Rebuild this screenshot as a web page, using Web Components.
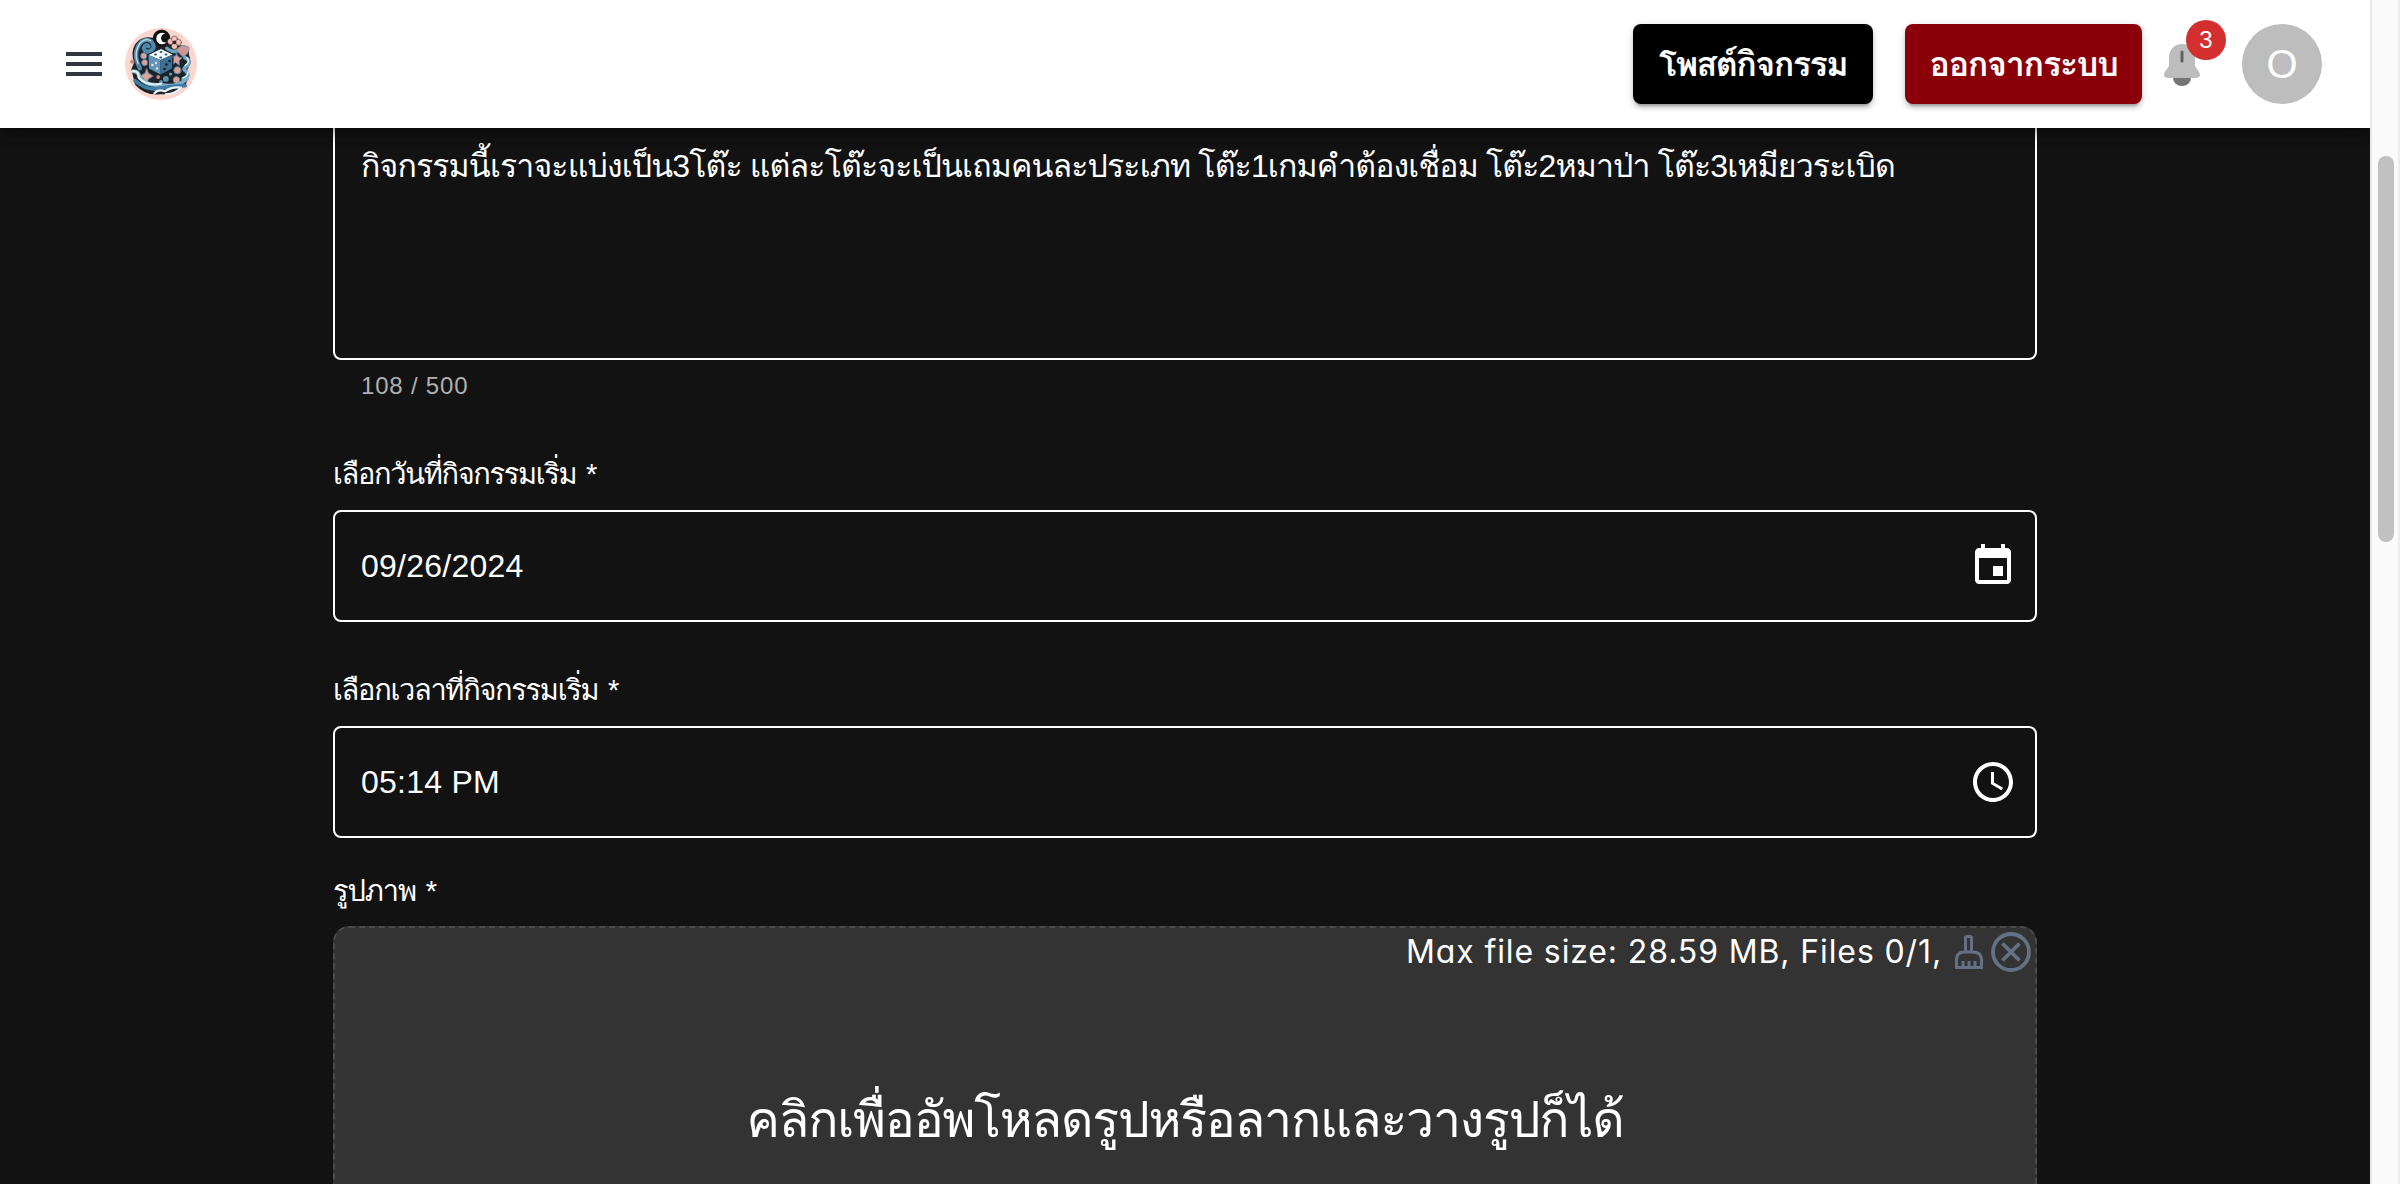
<!DOCTYPE html>
<html lang="th">
<head>
<meta charset="utf-8">
<title>Activity form</title>
<style>
html,body{margin:0;height:100%;overflow:hidden;background:#121212}
body{font-family:"Liberation Sans",Loma,Garuda,"Noto Sans Thai Looped","Noto Looped Thai",Waree,Umpush,"Noto Sans Thai","Noto Sans",sans-serif;color:#fff}
</style>
</head>
<body>
<event-page></event-page>
<script>
const define = (name, html, setup) => customElements.define(name, class extends HTMLElement {
  connectedCallback() {
    if (this.shadowRoot) return;
    this.attachShadow({mode: 'open'}).innerHTML = html;
    if (setup) setup(this, this.shadowRoot);
  }
});

/* One line of text whose tracking is set so that it fills the given width. */
define('fit-text', `<style>
:host{display:inline-block;white-space:pre}
span{display:inline-block}
</style><span><slot></slot></span>`, (el, root) => {
  const span = root.querySelector('span');
  const target = +el.getAttribute('width');
  const w0 = span.getBoundingClientRect().width;
  span.style.letterSpacing = '1px';
  const w1 = span.getBoundingClientRect().width;
  span.style.letterSpacing = ((target - w0) / (w1 - w0)).toFixed(3) + 'px';
});

define('menu-icon', `<style>:host{display:block;width:48px;height:48px}svg{display:block}</style>
<svg width="48" height="48" viewBox="0 0 24 24" fill="#2f3640"><path d="M3 18h18v-2H3v2zm0-5h18v-2H3v2zm0-7v2h18V6H3z"/></svg>`);

define('site-logo', `<style>:host{display:block;width:72px;height:72px}svg{display:block}</style>
<svg width="72" height="72" viewBox="0 0 72 72" fill="none" stroke-linecap="round" stroke-linejoin="round">
<circle cx="36" cy="36" r="36" fill="#fbd5ce"/>
<g transform="translate(1.500 1) scale(.96)">
<path d="M27 9Q15 7 9 16Q4 25 8 35L5 42L9 58Q20 70 35 68Q54 68 62 57Q66 50 63 43Q69 34 65 27Q66 17 56 17Q50 8 43 12Z" fill="#1d2326"/>
<path d="M14 41Q7 28 12 18Q18 8 26 13Q31 19 25 23Q19 25 18 20Q20 15 23 18" stroke="#4f88ad" stroke-width="4.500"/>
<path d="M12 36Q7 25 14 15Q19 9 25 12" stroke="#c4dde9" stroke-width="1.300"/>
<circle cx="36.500" cy="9.500" r="9" fill="#10110f"/><circle cx="37" cy="10" r="6" fill="#fff"/><circle cx="40.500" cy="9.500" r="4.500" fill="#10110f"/>
<g fill="#f6c1b8" stroke="#3a3032" stroke-width=".6"><circle cx="46" cy="13" r="3.200"/><circle cx="50" cy="10.500" r="3.200"/><circle cx="54" cy="14" r="3.200"/><circle cx="50" cy="18" r="3.200"/></g><circle cx="50" cy="14" r="2" fill="#3a2527"/>
<path d="M42 20Q49 27 58 20" stroke="#6ba3c4" stroke-width="3.500"/>
<path d="M52 22Q57 14 65 19Q66 25 59 29Z" fill="#cf9693" stroke="#7690a3"/>
<g fill="#dca29c" stroke="#4c7898" stroke-width="1"><circle cx="18" cy="28" r="3.300"/><circle cx="19" cy="35" r="3.300"/><path d="M21 41L23 46L28 49L23 52L21 57L18 52L14 49L19 46Z"/><path d="M52 25L54 29L58 30L55 33L55 38L51 35L48 37L49 31L47 28L51 28Z"/><circle cx="53" cy="43" r="3.800"/><circle cx="52" cy="53" r="3.500"/></g>
<g fill="#c98680"><circle cx="33" cy="50" r="2"/><circle cx="6" cy="34" r="2.200"/></g>
<g fill="#5d91b4"><circle cx="41" cy="52" r="3"/><circle cx="46" cy="47" r="1.800"/><circle cx="36" cy="55" r="2"/></g>
<path d="M61 30Q69 34 62 39Q58 42 62 44Q67 49 59 52" stroke="#6ca7c8" stroke-width="4"/><path d="M63 30Q67 34 61 38M64 45Q64 49 59 51" stroke="#eef6f9" stroke-width="1.400"/>
<path d="M7 44Q13 44 13 50Q21 60 36 58Q52 62 63 52" stroke="#77aecb" stroke-width="4"/><path d="M9 54Q23 66 39 61Q51 59 61 59" stroke="#3f7da6" stroke-width="4"/>
<path d="M6 44Q13 43 13 51Q22 60 36 57M29 67Q33 62 40 65Q47 60 56 61M41 68Q50 68 57 61" stroke="#e8f2f6" stroke-width="2.200"/>
</g>
<path d="M23.500 27L36 21L47.500 26.500L47 40.500L35.500 46.500L24 40.500Z" stroke="#17222a" stroke-width="2"/>
<path d="M23.500 27L36 21L47.500 26.500L35.500 32Z" fill="#f8fbfc"/><path d="M23.500 27L35.500 32V46.500L24 40.500Z" fill="#5f95b8"/><path d="M47.500 26.500L35.500 32V46.500L47 40.500Z" fill="#3b7199"/>
<g fill="#28577a"><ellipse cx="36" cy="24" rx="1.500" ry=".9"/><ellipse cx="30.500" cy="26.500" rx="1.500" ry=".9"/><ellipse cx="41" cy="26.500" rx="1.500" ry=".9"/><ellipse cx="35.700" cy="29.500" rx="1.500" ry=".9"/></g>
<g fill="#f0d6d3"><circle cx="27.500" cy="37" r="1.300"/><circle cx="31" cy="35" r="1.300"/><circle cx="32" cy="40.500" r="1.300"/></g><g fill="#101a22"><circle cx="39.500" cy="41" r="1.300"/><circle cx="41.500" cy="36.500" r="1.300"/><circle cx="44.500" cy="33" r="1.300"/></g>
</svg>`);

define('app-button', `<style>
:host{display:flex;box-sizing:border-box;height:80px;align-items:center;justify-content:center;border-radius:8px;
background:var(--fill);font-weight:700;font-size:34px;line-height:56px;color:#fff;
box-shadow:0 6px 2px -4px rgba(0,0,0,.2),0 4px 4px rgba(0,0,0,.14),0 2px 10px rgba(0,0,0,.12)}
</style><slot></slot>`);

define('bell-badge', `<style>
:host{display:grid;width:48px;height:48px;position:relative}
svg{display:block;width:48px;height:48px}
b{position:absolute;left:28px;top:-20px;width:40px;height:40px;border-radius:50%;background:#d32f2f;color:#fff;
font-weight:400;font-size:24px;line-height:40px;text-align:center}
</style><svg viewBox="0 0 48 48"><path d="M15 38a9 8 0 0 0 18 0z" fill="#757575"/><path d="M24 4c-8 0-13 6-13 14v7c0 3-5 6-5 10 0 2 2 3 4 3h28c2 0 4-1 4-3 0-4-5-7-5-10v-7C37 10 32 4 24 4z" fill="#bdbdbd"/><path d="M24 12v9" stroke="#616161" stroke-width="3" stroke-linecap="round"/></svg><b><slot></slot></b>`);

define('user-avatar', `<style>:host{display:flex;width:80px;height:80px;border-radius:50%;background:#bdbdbd;color:#fff;
align-items:center;justify-content:center;font-size:40px;line-height:80px}</style><slot></slot>`);

define('app-header', `<style>
:host{display:flex;box-sizing:border-box;height:128px;padding:0 48px 0 60px;align-items:center;background:#fff;
position:relative;z-index:2;box-shadow:0 4px 8px -2px rgba(0,0,0,.2),0 8px 10px rgba(0,0,0,.14),0 2px 20px rgba(0,0,0,.12)}
site-logo{margin-left:17px}
.post{width:240px;margin-left:auto;--fill:#000}
.exit{width:237px;margin-left:32px;--fill:#8b0008}
bell-badge{margin-left:16px}
user-avatar{margin-left:36px}
</style>
<menu-icon></menu-icon><site-logo></site-logo>
<app-button class="post"><fit-text width="188">โพสต์กิจกรรม</fit-text></app-button>
<app-button class="exit"><fit-text width="188">ออกจากระบบ</fit-text></app-button>
<bell-badge>3</bell-badge><user-avatar>O</user-avatar>`);

define('field-label', `<style>:host{display:block;height:40px;line-height:42px;font-size:29px;word-spacing:3px}</style><slot></slot>`);

define('field-box', `<style>
:host{display:flex;box-sizing:border-box;height:112px;border:2px solid #fff;border-radius:8px;padding:0 18px 0 26px;
align-items:center;justify-content:space-between;font-size:32px;line-height:46px}
:host([multiline]){height:252px;align-items:flex-start;padding-top:33px}
</style><slot></slot><slot name="icon"></slot>`);

define('calendar-icon', `<style>:host{display:block;width:48px;height:48px}svg{display:block}</style>
<svg width="48" height="48" viewBox="0 0 24 24" fill="#fff"><path d="M17 12h-5v5h5v-5zM16 1v2H8V1H6v2H5c-1.110 0-1.990.9-1.990 2L3 19c0 1.100.89 2 2 2h14c1.100 0 2-.9 2-2V5c0-1.100-.9-2-2-2h-1V1h-2zm3 18H5V8h14v11z"/></svg>`);
define('clock-icon', `<style>:host{display:block;width:48px;height:48px}svg{display:block}</style>
<svg width="48" height="48" viewBox="0 0 24 24" fill="#fff"><path d="M11.990 2C6.470 2 2 6.480 2 12s4.470 10 9.990 10C17.520 22 22 17.520 22 12S17.520 2 11.990 2zM12 20c-4.420 0-8-3.580-8-8s3.580-8 8-8 8 3.580 8 8-3.580 8-8 8z"/><path d="M12.500 7H11v6l5.250 3.150.75-1.230-4.500-2.670z"/></svg>`);

define('drop-zone', `<style>
:host{display:flex;flex-direction:column;box-sizing:border-box;height:400px;border:2px dashed #4b4b4b;border-radius:16px;background:#333}
.info{display:flex;height:48px;align-items:center;justify-content:flex-end;padding-right:4px;
font:32px/48px Inter,"Noto Sans",sans-serif;font-feature-settings:"cv11"}
.brush{margin-left:12px}.clear{margin-left:7px}svg{display:block}
.hint{display:flex;justify-content:center;margin-top:105px;font-size:50px;line-height:78px}
</style>
<div class="info"><fit-text width="536">Max file size: 28.59 MB, Files 0/1,</fit-text>
<svg class="brush" width="30" height="40" viewBox="0 0 30 40" fill="none" stroke="#667085" stroke-width="3"><path d="M11.500 19V6Q11.500 4.500 13 4.500H16Q17.500 4.500 17.500 6V19M2.500 35.500V28Q2.500 20 10 20H19Q27.500 20 27.500 28V35.500ZM9 35V29M15 35V29M21 35V29"/></svg>
<svg class="clear" width="40" height="40" viewBox="0 0 40 40" fill="none" stroke="#667085" stroke-width="3.800"><circle cx="20" cy="20" r="18"/><path d="M11.500 11.500L28.500 28.500M28.500 11.500L11.500 28.500"/></svg></div>
<div class="hint"><fit-text width="877">คลิกเพื่ออัพโหลดรูปหรือลากและวางรูปก็ได้</fit-text></div>`);

define('event-form', `<style>
:host{display:flex;flex-direction:column;width:1704px;margin:-20px auto 0}
.count{height:40px;margin:5px 0 48px 28px;font-size:24px;line-height:41px;letter-spacing:.8px;color:#b0b0b0}
.box{margin-top:17px;letter-spacing:.25px}.time{margin-top:47px}.pic{margin-top:32px}.drop{margin-top:16px}
</style>
<field-box multiline><fit-text width="1534">กิจกรรมนี้เราจะแบ่งเป็น3โต๊ะ แต่ละโต๊ะจะเป็นเถมคนละประเภท โต๊ะ1เกมคำต้องเชื่อม โต๊ะ2หมาป่า โต๊ะ3เหมียวระเบิด</fit-text></field-box>
<div class="count">108 / 500</div>
<field-label><fit-text width="263">เลือกวันที่กิจกรรมเริ่ม *</fit-text></field-label>
<field-box class="box">09/26/2024<calendar-icon slot="icon"></calendar-icon></field-box>
<field-label class="time"><fit-text width="285">เลือกเวลาที่กิจกรรมเริ่ม *</fit-text></field-label>
<field-box class="box">05:14 PM<clock-icon slot="icon"></clock-icon></field-box>
<field-label class="pic"><fit-text width="103">รูปภาพ *</fit-text></field-label>
<drop-zone class="drop"></drop-zone>`);

define('scroll-track', `<style>
:host{display:block;box-sizing:border-box;width:30px;height:1184px;padding:156px 4px 0 6px;background:#fafafa;
border-left:2px solid #e8e8e8;border-right:2px solid #ededed}
i{display:block;width:16px;height:386px;border-radius:8px;background:#c1c1c1}
</style><i></i>`);

define('event-page', `<style>
:host{display:flex;height:1184px;overflow:hidden}
main{width:2370px;height:1184px;overflow:hidden}
</style><main><app-header></app-header><event-form></event-form></main><scroll-track></scroll-track>`);
</script>
</body>
</html>
